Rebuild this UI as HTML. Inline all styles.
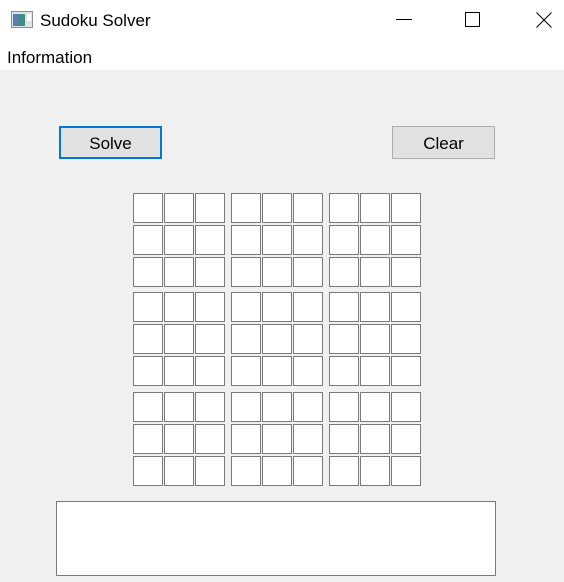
<!DOCTYPE html>
<html><head><style>
*{margin:0;padding:0;box-sizing:border-box}
body{width:564px;height:582px;background:#f0f0f0;position:relative;overflow:hidden;font-family:"Liberation Sans",sans-serif}
.title{position:absolute;left:0;top:0;width:564px;height:46px;background:#fff}
.menu{position:absolute;left:0;top:46px;width:564px;height:24px;background:#fff}
.t{position:absolute;font-size:17px;color:#000;white-space:nowrap}
.btn{position:absolute;top:126px;width:103px;height:33px;background:#e1e1e1;border:1px solid #adadad;font-size:17px;text-align:center;line-height:33px}
.blk{position:absolute;width:92px;display:grid;grid-template-columns:30px 30px 30px;grid-auto-rows:30px;column-gap:1px;row-gap:2px}
.blk div{background:#fff;border:1px solid #7a7a7a}
</style></head><body>
<div class="title"></div>
<svg style="position:absolute;left:11px;top:11px" width="22" height="18"><rect x="0.5" y="0.5" width="21" height="16" fill="#dfe3e6" stroke="#8a9097"/><rect x="2" y="3" width="12" height="12" fill="#3f8f7e"/><rect x="2" y="3" width="6" height="12" fill="#5a7fae"/><rect x="16" y="3" width="4" height="7" fill="#fff"/></svg>
<div class="t" style="left:40px;top:11px">Sudoku Solver</div>
<div style="position:absolute;left:396px;top:19px;width:16px;height:1px;background:#000"></div>
<div style="position:absolute;left:465px;top:12px;width:15px;height:15px;border:1px solid #000"></div>
<svg style="position:absolute;left:536px;top:12px" width="16" height="16"><path d="M0.5 0.5L15.5 15.5M15.5 0.5L0.5 15.5" stroke="#000" stroke-width="1"/></svg>
<div class="menu"></div>
<div class="t" style="left:7px;top:48px">Information</div>
<div class="btn" style="left:59px;border:2px solid #0078d7;line-height:31px">Solve</div>
<div class="btn" style="left:392px">Clear</div>
<div class="blk" style="left:133px;top:193px"><div></div><div></div><div></div><div></div><div></div><div></div><div></div><div></div><div></div></div>
<div class="blk" style="left:231px;top:193px"><div></div><div></div><div></div><div></div><div></div><div></div><div></div><div></div><div></div></div>
<div class="blk" style="left:329px;top:193px"><div></div><div></div><div></div><div></div><div></div><div></div><div></div><div></div><div></div></div>
<div class="blk" style="left:133px;top:292px"><div></div><div></div><div></div><div></div><div></div><div></div><div></div><div></div><div></div></div>
<div class="blk" style="left:231px;top:292px"><div></div><div></div><div></div><div></div><div></div><div></div><div></div><div></div><div></div></div>
<div class="blk" style="left:329px;top:292px"><div></div><div></div><div></div><div></div><div></div><div></div><div></div><div></div><div></div></div>
<div class="blk" style="left:133px;top:392px"><div></div><div></div><div></div><div></div><div></div><div></div><div></div><div></div><div></div></div>
<div class="blk" style="left:231px;top:392px"><div></div><div></div><div></div><div></div><div></div><div></div><div></div><div></div><div></div></div>
<div class="blk" style="left:329px;top:392px"><div></div><div></div><div></div><div></div><div></div><div></div><div></div><div></div><div></div></div>
<div style="position:absolute;left:56px;top:501px;width:440px;height:75px;background:#fff;border:1px solid #7a7a7a"></div>
</body></html>
